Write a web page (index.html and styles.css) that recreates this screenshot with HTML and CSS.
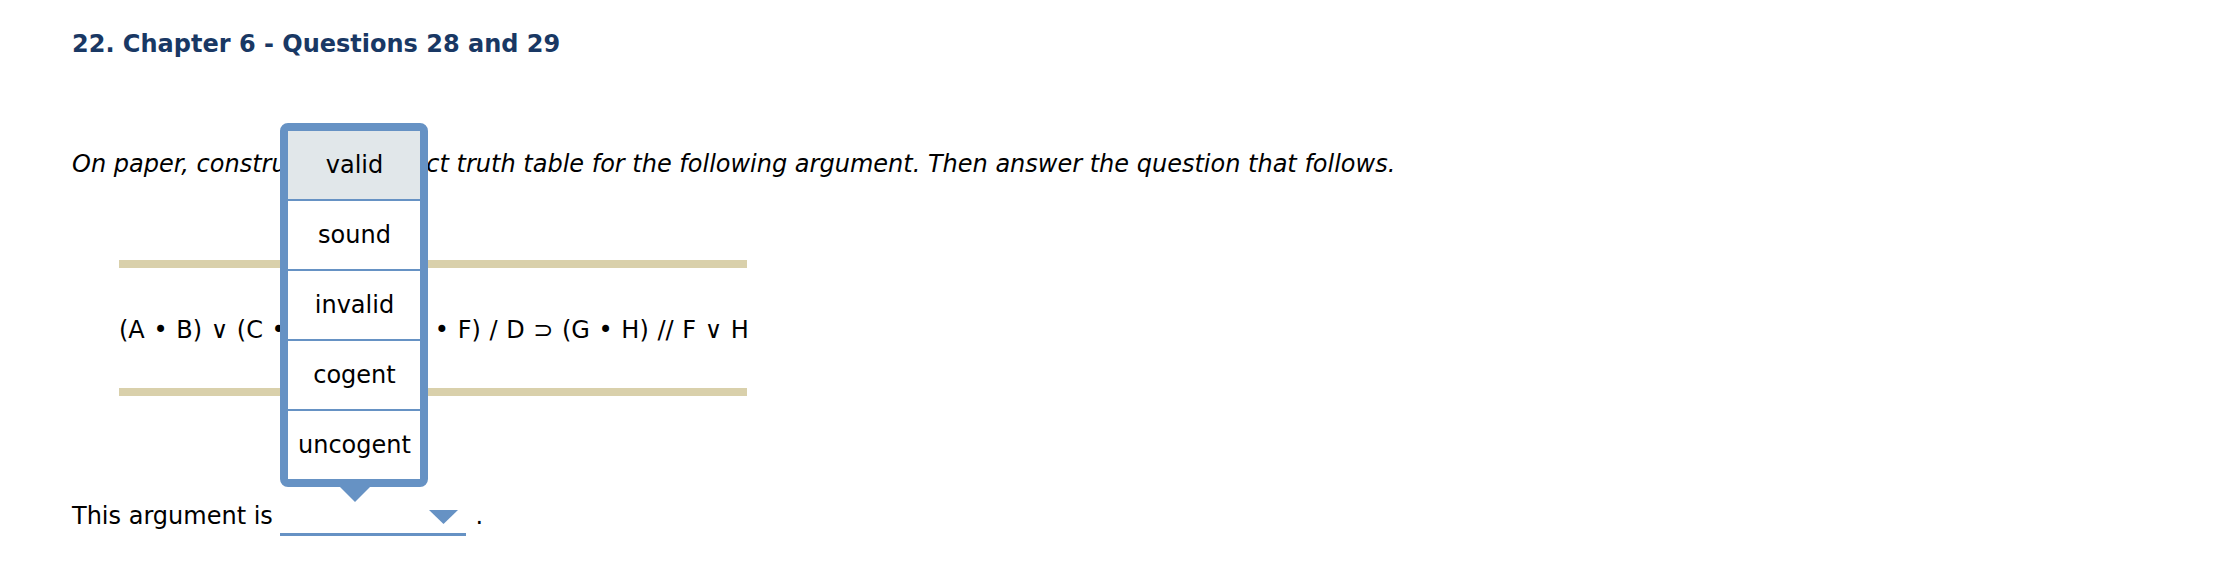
FILE: index.html
```html
<!DOCTYPE html>
<html lang="en">
<head>
<meta charset="utf-8">
<title>22. Chapter 6 - Questions 28 and 29</title>
<link rel="stylesheet" href="styles.css">
</head>
<body>
<main class="question">
  <h2 class="title">22. Chapter 6 - Questions 28 and 29</h2>
  <p class="prompt">On paper, construct the correct truth table for the following argument. Then answer the question that follows.</p>
  <div class="formula">(A • B) ∨ (C • D) / C ⊃ (E • F) / D ⊃ (G • H) // F ∨ H</div>
  <p class="answer">This argument is <span class="select"><svg class="caret" width="29" height="14" viewBox="0 0 29 14"><polygon points="0,0 29,0 14.5,14" fill="#6692c4"/></svg><span class="popup"><span class="option selected">valid</span><span class="option">sound</span><span class="option">invalid</span><span class="option">cogent</span><span class="option">uncogent</span></span></span>.</p>
</main>
</body>
</html>
```
FILE: styles.css
```css
html, body {
  margin: 0;
  padding: 0;
  background: #ffffff;
}

body {
  font-family: "DejaVu Sans", Verdana, sans-serif;
  font-size: 24px;
  line-height: 28px;
  color: #000000;
}

.question {
  padding: 30px 0 0 72px;
}

.title {
  margin: 0;
  font-size: 24px;
  line-height: 28px;
  font-weight: bold;
  color: #193864;
}

.prompt {
  margin: 92px 0 0;
  font-style: italic;
}

.formula {
  margin: 82px 0 0 47px;
  width: 628px;
  border-top: 8px solid #d9d0ab;
  border-bottom: 8px solid #d9d0ab;
  padding: 48px 0 44px;
  white-space: nowrap;
  word-spacing: 1px;
}

.answer {
  margin: 106px 0 0;
}

.select {
  position: relative;
  display: inline-block;
  box-sizing: border-box;
  width: 186px;
  height: 34px;
  margin: 0 9px 0 0;
  padding: 8px 8px 0;
  border-bottom: 3px solid #6692c4;
  vertical-align: -12px;
}

.caret {
  display: block;
  margin-left: auto;
}

.popup {
  position: absolute;
  left: 0;
  bottom: calc(100% + 15px);
  z-index: 2;
  box-sizing: border-box;
  width: 148px;
  display: flex;
  flex-direction: column;
  background: #ffffff;
  border: 8px solid #6692c4;
  border-radius: 8px;
}

.popup::after {
  content: "";
  position: absolute;
  top: calc(100% + 8px);
  left: 50%;
  margin-left: -14px;
  border-left: 15px solid transparent;
  border-right: 15px solid transparent;
  border-top: 15px solid #6692c4;
}

.option {
  display: block;
  height: 68px;
  line-height: 68px;
  text-align: center;
  color: #000000;
}

.option + .option {
  border-top: 2px solid #6692c4;
}

.option.selected {
  background: #e1e7ea;
}
```
